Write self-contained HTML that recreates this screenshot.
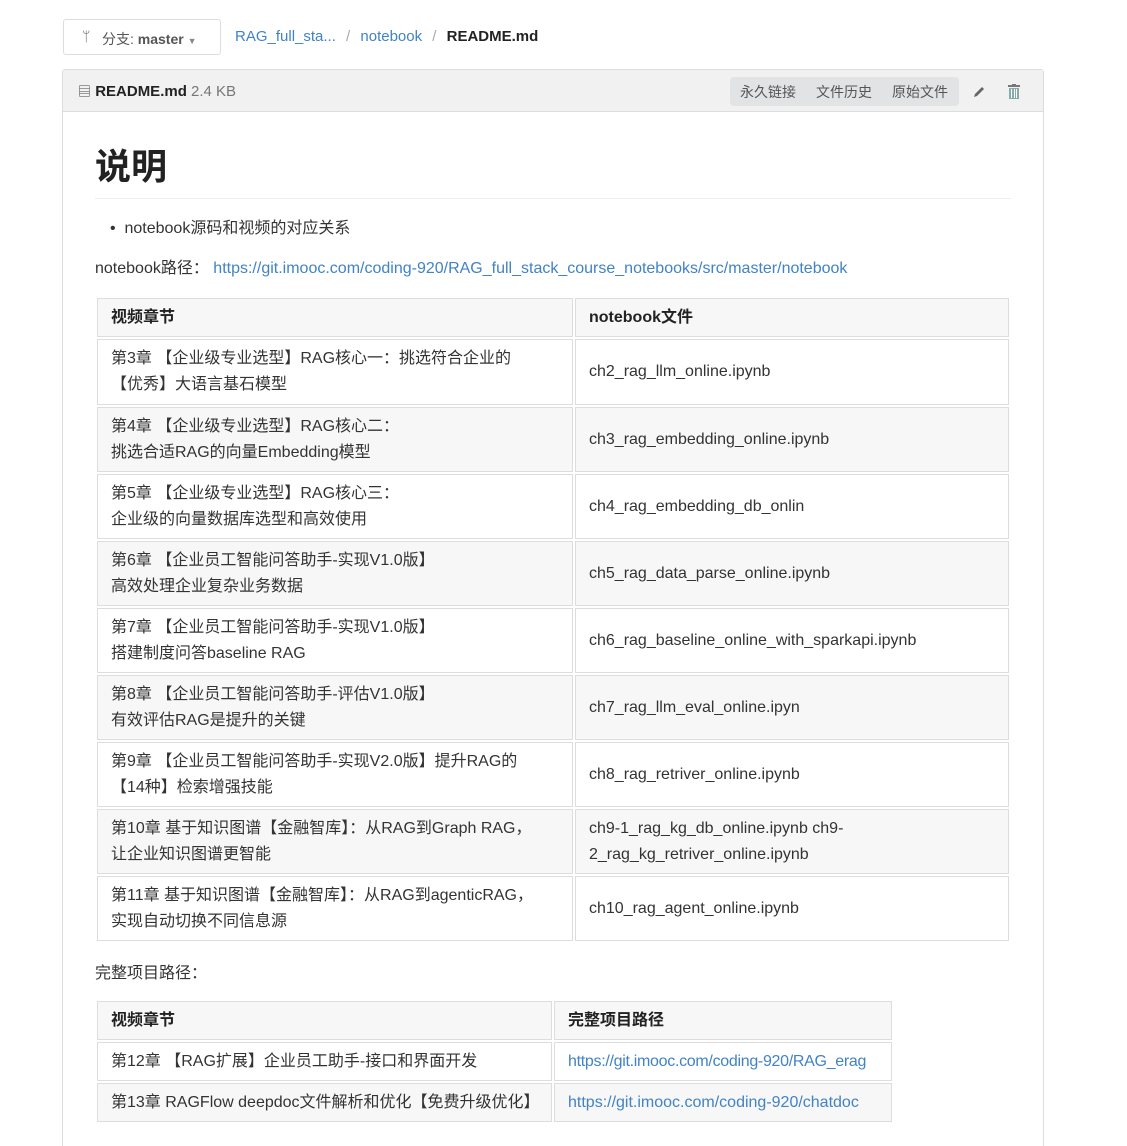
<!DOCTYPE html>
<html style="width:1127px;height:1146px;overflow:hidden"><head><meta charset="utf-8"><style>
*{box-sizing:border-box}
body{margin:0;background:#fff;font-family:"Liberation Sans","Noto Sans CJK SC",sans-serif;color:#333;font-size:16px;width:1127px;height:1146px;overflow:hidden;position:relative}
.abs{position:absolute}
.branch{left:63px;top:19px;width:158px;height:36px;border:1px solid #ddd;border-radius:3px;font-size:14px;color:#555;padding:9px 0 0 38px}
.crumb{left:235px;top:28px;font-size:15px;color:#4183c4}
.crumb .s{color:#aaa;margin:0 6px}
.crumb b{color:#222}
.box{left:62px;top:69px;width:982px;height:1100px;border:1px solid #ddd;border-radius:3px}
.hdr{height:42px;background:#f1f1f1;border-bottom:1px solid #ddd;position:relative}
.btns{position:absolute;left:667px;top:7px;width:229px;height:29px;background:#e2e3e5;border-radius:4px;font-size:14px;color:#555;padding-top:6px}
.btns span{position:absolute;top:5px}
h1{position:absolute;left:95px;top:143px;margin:0;font-size:36px;font-weight:bold;color:#222;line-height:48px}
.hr{left:95px;top:198px;width:916px;height:1px;background:#eee}
table{position:absolute;border-collapse:separate;border-spacing:2px;font-size:16px;color:#333}
td,th{border:1px solid #ddd;padding:0 13px;text-align:left;vertical-align:middle;line-height:26px;white-space:nowrap}
th{background:#f7f7f8;font-weight:bold;color:#222}
tr.g td{background:#f7f7f7}
a{color:#4183c4;text-decoration:none}
</style></head><body>
<div class="abs branch"><span style="position:absolute;left:18px;top:8px;font-size:14px;color:#666">ᛘ</span>分支: <b>master</b> <span style="font-size:9px;color:#888">▼</span></div>
<div class="abs crumb">RAG_full_sta... <span class="s">/</span> notebook <span class="s">/</span> <b>README.md</b></div>
<div class="abs box"><div class="hdr">
<span style="position:absolute;left:15px;top:11px;font-size:15px;color:#222"><span style="font-size:13px;color:#444">▤</span> <b>README.md</b> <span style="color:#777">2.4 KB</span></span>
<div class="btns"><span style="left:10px">永久链接</span><span style="left:86px">文件历史</span><span style="left:162px">原始文件</span></div>
<svg style="position:absolute;left:909px;top:15px" width="14" height="14" viewBox="0 0 14 14"><path d="M2 12 L3 9 L10 2 L12 4 L5 11 Z" fill="#666"/></svg>
<svg style="position:absolute;left:945px;top:14px" width="12" height="15" viewBox="0 0 12 15"><rect x="0" y="1" width="12" height="2" fill="#777"/><rect x="4" y="0" width="4" height="2" fill="#777"/><rect x="1" y="4" width="10" height="11" fill="#8aa"/><rect x="3" y="5" width="1" height="9" fill="#fff"/><rect x="6" y="5" width="1" height="9" fill="#fff"/><rect x="8" y="5" width="1" height="9" fill="#fff"/></svg>
</div></div>
<h1>说明</h1>
<div class="abs hr"></div>
<div class="abs" style="left:110px;top:214px">• &nbsp;notebook源码和视频的对应关系</div>
<div class="abs" style="left:95px;top:254px">notebook路径：&nbsp;<a>https://git.imooc.com/coding-920/RAG_full_stack_course_notebooks/src/master/notebook</a></div>
<table style="left:95px;top:296px;width:916px">
<tr style="height:39px"><th style="width:476px">视频章节</th><th>notebook文件</th></tr>
<tr style="height:66px"><td>第3章 【企业级专业选型】RAG核心一：挑选符合企业的<br>【优秀】大语言基石模型</td><td>ch2_rag_llm_online.ipynb</td></tr>
<tr class="g" style="height:65px"><td>第4章 【企业级专业选型】RAG核心二：<br>挑选合适RAG的向量Embedding模型</td><td>ch3_rag_embedding_online.ipynb</td></tr>
<tr style="height:65px"><td>第5章 【企业级专业选型】RAG核心三：<br>企业级的向量数据库选型和高效使用</td><td>ch4_rag_embedding_db_onlin</td></tr>
<tr class="g" style="height:65px"><td>第6章 【企业员工智能问答助手-实现V1.0版】<br>高效处理企业复杂业务数据</td><td>ch5_rag_data_parse_online.ipynb</td></tr>
<tr style="height:65px"><td>第7章 【企业员工智能问答助手-实现V1.0版】<br>搭建制度问答baseline RAG</td><td>ch6_rag_baseline_online_with_sparkapi.ipynb</td></tr>
<tr class="g" style="height:65px"><td>第8章 【企业员工智能问答助手-评估V1.0版】<br>有效评估RAG是提升的关键</td><td>ch7_rag_llm_eval_online.ipyn</td></tr>
<tr style="height:65px"><td>第9章 【企业员工智能问答助手-实现V2.0版】提升RAG的<br>【14种】检索增强技能</td><td>ch8_rag_retriver_online.ipynb</td></tr>
<tr class="g" style="height:65px"><td>第10章 基于知识图谱【金融智库】：从RAG到Graph RAG，<br>让企业知识图谱更智能</td><td>ch9-1_rag_kg_db_online.ipynb ch9-<br>2_rag_kg_retriver_online.ipynb</td></tr>
<tr style="height:65px"><td>第11章 基于知识图谱【金融智库】：从RAG到agenticRAG，<br>实现自动切换不同信息源</td><td>ch10_rag_agent_online.ipynb</td></tr>
</table>
<div class="abs" style="left:95px;top:959px">完整项目路径：</div>
<table style="left:95px;top:999px;width:799px;table-layout:fixed">
<tr style="height:39px"><th style="width:455px">视频章节</th><th>完整项目路径</th></tr>
<tr style="height:39px"><td>第12章 【RAG扩展】企业员工助手-接口和界面开发</td><td style="letter-spacing:-0.3px"><a>https://git.imooc.com/coding-920/RAG_erag</a></td></tr>
<tr class="g" style="height:39px"><td>第13章 RAGFlow deepdoc文件解析和优化【免费升级优化】</td><td><a>https://git.imooc.com/coding-920/chatdoc</a></td></tr>
</table>
</body></html>
